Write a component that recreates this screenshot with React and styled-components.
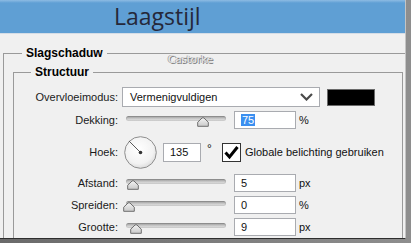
import React from "react";
import styled, { createGlobalStyle } from "styled-components";

const GlobalStyle = createGlobalStyle`
  html, body {
    margin: 0;
    padding: 0;
    background: #5a5a5a;
  }
  body {
    font-family: "Liberation Sans", Arial, sans-serif;
    font-size: 11px;
    color: #111;
  }
`;

const Frame = styled.div`
  width: 411px;
  height: 243px;
  overflow: hidden;
  background: linear-gradient(to right, #6a6a6a, #8e8e8e);
`;

const Window = styled.div`
  position: relative;
  width: 405px;
  height: 238px;
  overflow: hidden;
  background: #f0f0f0;
  border-right: 1px solid #c4c4c4;
  border-bottom: 1px solid #2e2e2e;
`;

const TitleBar = styled.div`
  height: 33px;
  border-bottom: 1px solid #d5dde6;
  background: linear-gradient(to bottom, #8dbbe3 0px, #5f9fd4 3px, #5f9fd4 100%);
  display: flex;
  align-items: center;
  padding-left: 114px;
`;

const Title = styled.h1`
  margin: 0;
  margin-top: -2px;
  font-family: "Open Sans", "Noto Sans", sans-serif;
  font-weight: 400;
  font-size: 23px;
  color: #25283a;
`;

const Body = styled.div`
  padding: 12px 0 0 3px;
`;

const Group = styled.fieldset`
  margin: 0;
  min-width: 0;
  border: 1px solid #9a9a9a;
  padding: ${(p) => p.$pad};
  width: ${(p) => p.$width}px;
  box-sizing: border-box;
`;

const Legend = styled.legend`
  margin-left: ${(p) => p.$offset}px;
  padding: 0 4px;
  font-weight: bold;
  font-size: 12px;
  line-height: 14px;
  color: #000;
`;

const Watermark = styled.div`
  position: absolute;
  left: 168px;
  top: 53px;
  font-family: "DejaVu Sans", sans-serif;
  font-size: 10.5px;
  letter-spacing: -0.2px;
  color: #e4e4e4;
  text-shadow: 1px 1px 0 #7e7e7e, -1px 0 0 #a8a8a8;
`;

const Rows = styled.div`
  display: flex;
  flex-direction: column;
`;

const Row = styled.div`
  display: flex;
  align-items: center;
  height: ${(p) => p.$h}px;
`;

const Label = styled.span`
  width: 104px;
  flex: none;
  text-align: right;
  font-size: 11px;
  color: #1a1a1a;
`;

const Select = styled.div`
  margin-left: 4px;
  width: 198px;
  height: 20px;
  box-sizing: border-box;
  background: #fff;
  border: 1px solid #a9abb0;
  display: flex;
  align-items: center;
  justify-content: space-between;
  padding: 0 6px 0 7px;
`;

const Swatch = styled.div`
  margin-left: 7px;
  width: 48px;
  height: 17px;
  background: #000;
  border: 1px solid #6a6a6a;
  box-sizing: border-box;
`;

const Slider = styled.div`
  position: relative;
  margin-left: 8px;
  width: 100px;
  height: 14px;
  flex: none;
`;

const Track = styled.div`
  position: absolute;
  left: 0;
  right: 0;
  top: 3px;
  height: 5px;
  border-radius: 3px;
  background: linear-gradient(to bottom, #8c8c8c 0, #a8a8a8 1px, #cfcfcf 3px, #e2e2e2 100%);
  box-shadow: inset 0 0 0 1px rgba(0, 0, 0, 0.08);
`;

const Thumb = styled.svg`
  position: absolute;
  top: 4px;
  width: 12px;
  height: 10px;
`;

const Field = styled.div`
  margin-left: ${(p) => p.$ml}px;
  width: ${(p) => p.$w}px;
  height: ${(p) => p.$hgt || 18}px;
  box-sizing: border-box;
  background: #fff;
  border: 1px solid #a9abb0;
  display: flex;
  align-items: center;
  padding-left: 6px;
  font-size: 11px;
  flex: none;
`;

const Selected = styled.span`
  background: #3b8ff0;
  color: #fff;
  padding: 0 1px;
`;

const Unit = styled.span`
  margin-left: 3px;
  font-size: 11px;
`;

const Dial = styled.svg`
  margin-left: 6px;
  width: 33px;
  height: 33px;
  flex: none;
`;

const Degree = styled.span`
  margin-left: 6px;
  align-self: flex-start;
  margin-top: 10px;
  font-size: 12px;
  width: 6px;
`;

const Check = styled.svg`
  margin-left: 9px;
  width: 19px;
  height: 19px;
  flex: none;
`;

const CheckText = styled.span`
  margin-left: 4px;
  font-size: 11px;
`;

const SliderControl = ({ pos }) => (
  <Slider>
    <Track />
    <Thumb style={{ left: pos - 6 }} viewBox="0 0 12 10">
      <defs>
        <linearGradient id={`tg${pos}`} x1="0" y1="0" x2="0" y2="1">
          <stop offset="0" stopColor="#f4f4f4" />
          <stop offset="1" stopColor="#c9c9c9" />
        </linearGradient>
      </defs>
      <path
        d="M6 0.7 Q7 0.7 8 2 L11.3 5.2 L11.3 9.3 L0.7 9.3 L0.7 5.2 L4 2 Q5 0.7 6 0.7 Z"
        fill={`url(#tg${pos})`}
        stroke="#6e6e6e"
        strokeWidth="1"
      />
    </Thumb>
  </Slider>
);

const App = () => {
  return (
    <>
      <GlobalStyle />
      <Frame>
        <Window>
          <TitleBar>
            <Title>Laagstijl</Title>
          </TitleBar>
          <Body>
            <Group $pad="5px 0 0 9px" $width={410}>
              <Legend $offset={9}>Slagschaduw</Legend>
              <Group $pad="7px 0 0 0" $width={390}>
                <Legend $offset={17}>Structuur</Legend>
                <Rows>
                  <Row $h={22}>
                    <Label>Overvloeimodus:</Label>
                    <Select>
                      <span>Vermenigvuldigen</span>
                      <svg width="13" height="8" viewBox="0 0 13 8">
                        <polyline
                          points="1,1 6.5,6.5 12,1"
                          fill="none"
                          stroke="#4a4a4a"
                          strokeWidth="2.2"
                        />
                      </svg>
                    </Select>
                    <Swatch />
                  </Row>
                  <Row $h={24}>
                    <Label>Dekking:</Label>
                    <SliderControl pos={77} />
                    <Field $ml={8} $w={62}>
                      <Selected>75</Selected>
                    </Field>
                    <Unit>%</Unit>
                  </Row>
                  <Row $h={40}>
                    <Label>Hoek:</Label>
                    <Dial viewBox="0 0 33 33">
                      <defs>
                        <radialGradient id="dialg" cx="0.45" cy="0.4" r="0.65">
                          <stop offset="0" stopColor="#ffffff" />
                          <stop offset="0.7" stopColor="#f2f2f2" />
                          <stop offset="1" stopColor="#d6d6d6" />
                        </radialGradient>
                      </defs>
                      <circle cx="16.5" cy="16.5" r="15.8" fill="url(#dialg)" stroke="#8e8e8e" strokeWidth="1" />
                      <line x1="16.5" y1="16.5" x2="5" y2="5" stroke="#5a5a5a" strokeWidth="1" />
                      <circle cx="16.5" cy="16.5" r="1.8" fill="#333" />
                    </Dial>
                    <Field $ml={6} $w={38} $hgt={19}>
                      135
                    </Field>
                    <Degree>°</Degree>
                    <Check viewBox="0 0 19 19">
                      <rect x="0.5" y="0.5" width="18" height="18" fill="#fff" stroke="#333" />
                      <path d="M3.5 9.5 L7.5 14 L15.5 4" fill="none" stroke="#000" strokeWidth="3" />
                    </Check>
                    <CheckText>Globale belichting gebruiken</CheckText>
                  </Row>
                  <Row $h={22}>
                    <Label>Afstand:</Label>
                    <SliderControl pos={7} />
                    <Field $ml={8} $w={62}>
                      5
                    </Field>
                    <Unit>px</Unit>
                  </Row>
                  <Row $h={22}>
                    <Label>Spreiden:</Label>
                    <SliderControl pos={3} />
                    <Field $ml={8} $w={62}>
                      0
                    </Field>
                    <Unit>%</Unit>
                  </Row>
                  <Row $h={22}>
                    <Label>Grootte:</Label>
                    <SliderControl pos={10} />
                    <Field $ml={8} $w={62}>
                      9
                    </Field>
                    <Unit>px</Unit>
                  </Row>
                </Rows>
              </Group>
            </Group>
          </Body>
          <Watermark>Castorke</Watermark>
        </Window>
      </Frame>
    </>
  );
};

export default App;
